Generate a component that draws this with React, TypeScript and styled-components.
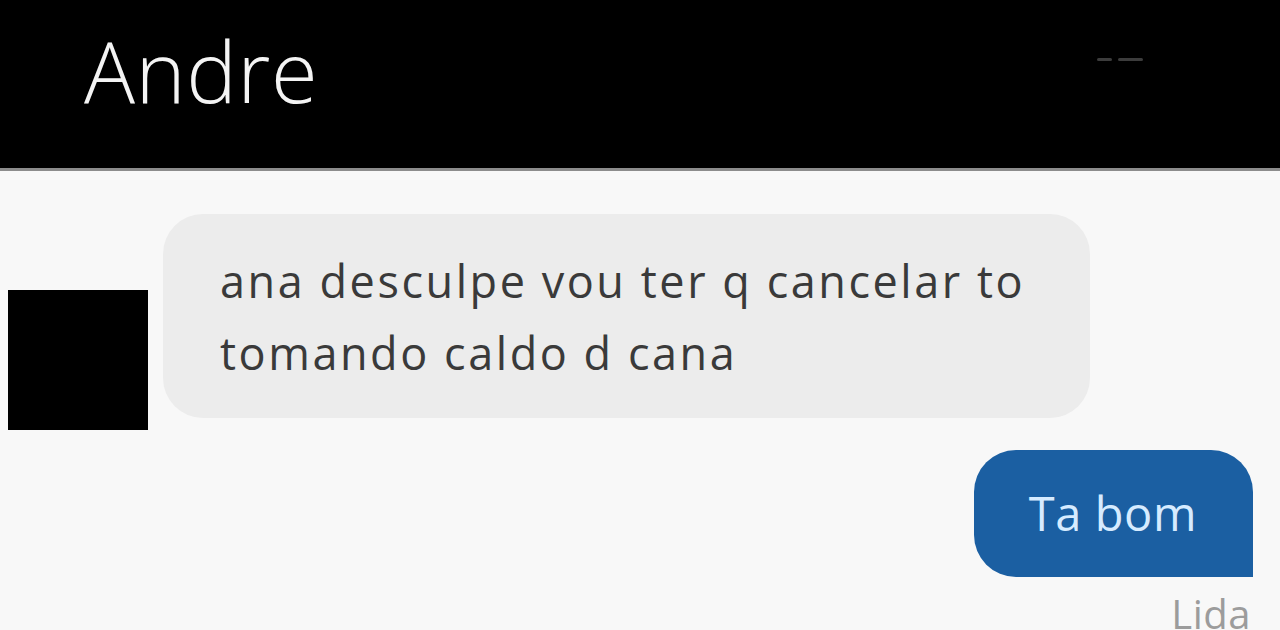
import React from 'react';
import styled, { createGlobalStyle } from 'styled-components';

const GlobalStyle = createGlobalStyle`
  html, body {
    margin: 0;
    padding: 0;
    background: #f8f8f8;
    overflow: hidden;
  }
  body {
    font-family: 'Open Sans', 'DejaVu Sans', sans-serif;
  }
`;

const Screen = styled.div`
  width: 1280px;
  height: 630px;
  display: flex;
  flex-direction: column;
  background: #f8f8f8;
  overflow: hidden;
`;

const Header = styled.header`
  box-sizing: border-box;
  height: 171px;
  flex-shrink: 0;
  background: #000;
  border-bottom: 3px solid #8c8c8c;
  display: flex;
  align-items: flex-start;
  justify-content: space-between;
  padding: 28px 137px 0 84px;
`;

const Title = styled.h1`
  margin: 0;
  font-family: 'Open Sans', sans-serif;
  font-weight: 300;
  font-size: 85px;
  line-height: 1;
  color: #f4f4f4;
  letter-spacing: 0.5px;
`;

const Dashes = styled.div`
  display: flex;
  gap: 6px;
  margin-top: 30px;
`;

const Dash = styled.span<{ $w: number }>`
  width: ${(p) => p.$w}px;
  height: 3px;
  background: #3c3c3c;
  border-radius: 2px;
`;

const Thread = styled.main`
  flex: 1;
  display: flex;
  flex-direction: column;
  padding: 43px 27px 0 8px;
`;

const IncomingRow = styled.div`
  display: flex;
  align-items: flex-end;
  gap: 15px;
`;

const Avatar = styled.div`
  width: 140px;
  height: 140px;
  background: #000;
  flex-shrink: 0;
`;

const Bubble = styled.div<{ $out?: boolean }>`
  box-sizing: border-box;
  font-family: 'Open Sans', sans-serif;
  color: ${(p) => (p.$out ? '#d6ebff' : '#3a3a3a')};
  background: ${(p) => (p.$out ? '#1b5fa2' : '#ececec')};
  border-radius: ${(p) => (p.$out ? '42px 42px 0 42px' : '40px')};
`;

const InBubble = styled(Bubble)`
  width: 927px;
  padding: 31px 30px 29px 57px;
  margin-bottom: 12px;
  font-size: 45px;
  letter-spacing: 2.55px;
  line-height: 72px;
  white-space: nowrap;
`;

const OutgoingRow = styled.div`
  display: flex;
  flex-direction: column;
  align-items: flex-end;
  margin-top: 20px;
`;

const OutBubble = styled(Bubble)`
  height: 127px;
  padding: 0 56px 0 55px;
  display: flex;
  align-items: center;
  font-size: 47px;
  letter-spacing: 0.6px;
  line-height: 1;
`;

const Status = styled.span`
  margin-top: 17px;
  font-family: 'Open Sans', sans-serif;
  font-size: 40px;
  letter-spacing: 0.5px;
  line-height: 1;
  color: #9c9c9c;
  margin-right: 2px;
`;

export default function App() {
  return (
    <Screen>
      <GlobalStyle />
      <Header>
        <Title>Andre</Title>
        <Dashes>
          <Dash $w={15} />
          <Dash $w={25} />
        </Dashes>
      </Header>
      <Thread>
        <IncomingRow>
          <Avatar />
          <InBubble>
            ana desculpe vou ter q cancelar to
            <br />
            tomando caldo d cana
          </InBubble>
        </IncomingRow>
        <OutgoingRow>
          <OutBubble $out>Ta bom</OutBubble>
          <Status>Lida</Status>
        </OutgoingRow>
      </Thread>
    </Screen>
  );
}
